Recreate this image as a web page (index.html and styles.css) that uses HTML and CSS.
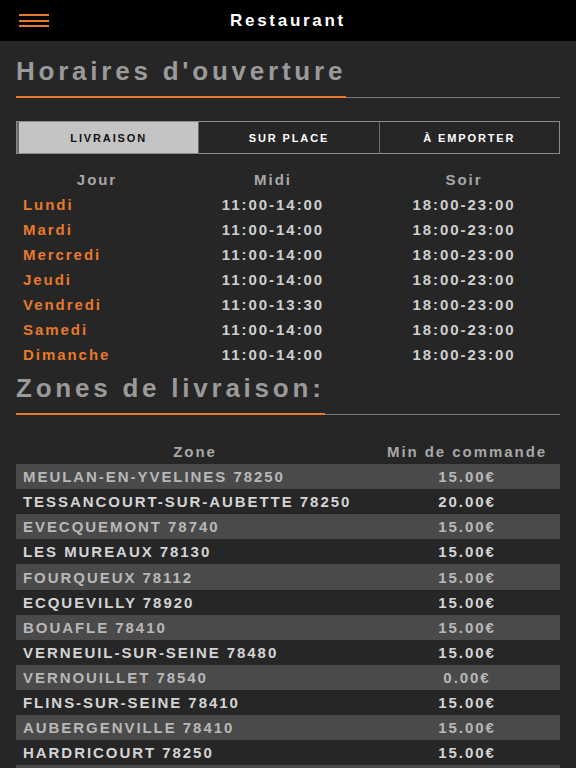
FILE: index.html
```html
<!DOCTYPE html>
<html lang="fr">
<head>
<meta charset="utf-8">
<title>Restaurant</title>
<link rel="stylesheet" href="styles.css">
</head>
<body>
<header class="topbar">
  <button class="burger" aria-label="Menu">
    <span></span><span></span><span></span>
  </button>
  <h1 class="topbar-title">Restaurant</h1>
</header>
<main class="content">
  <div class="title-wrap"><h2 class="title">Horaires d'ouverture</h2></div>
  <div class="tabs">
    <div class="tab active">LIVRAISON</div>
    <div class="tab">SUR PLACE</div>
    <div class="tab">À EMPORTER</div>
  </div>
  <div class="hours">
    <div class="hrow head"><span class="c1">Jour</span><span>Midi</span><span>Soir</span></div>
    <div class="hrow"><span class="day">Lundi</span><span>11:00-14:00</span><span>18:00-23:00</span></div>
    <div class="hrow"><span class="day">Mardi</span><span>11:00-14:00</span><span>18:00-23:00</span></div>
    <div class="hrow"><span class="day">Mercredi</span><span>11:00-14:00</span><span>18:00-23:00</span></div>
    <div class="hrow"><span class="day">Jeudi</span><span>11:00-14:00</span><span>18:00-23:00</span></div>
    <div class="hrow"><span class="day">Vendredi</span><span>11:00-13:30</span><span>18:00-23:00</span></div>
    <div class="hrow"><span class="day">Samedi</span><span>11:00-14:00</span><span>18:00-23:00</span></div>
    <div class="hrow"><span class="day">Dimanche</span><span>11:00-14:00</span><span>18:00-23:00</span></div>
  </div>
  <div class="title-wrap zones-title"><h2 class="title">Zones de livraison:</h2></div>
  <div class="zones">
    <div class="zrow head"><span>Zone</span><span>Min de commande</span></div>
    <div class="zrow odd"><span>MEULAN-EN-YVELINES 78250</span><span>15.00€</span></div>
    <div class="zrow"><span>TESSANCOURT-SUR-AUBETTE 78250</span><span>20.00€</span></div>
    <div class="zrow odd"><span>EVECQUEMONT 78740</span><span>15.00€</span></div>
    <div class="zrow"><span>LES MUREAUX 78130</span><span>15.00€</span></div>
    <div class="zrow odd"><span>FOURQUEUX 78112</span><span>15.00€</span></div>
    <div class="zrow"><span>ECQUEVILLY 78920</span><span>15.00€</span></div>
    <div class="zrow odd"><span>BOUAFLE 78410</span><span>15.00€</span></div>
    <div class="zrow"><span>VERNEUIL-SUR-SEINE 78480</span><span>15.00€</span></div>
    <div class="zrow odd"><span>VERNOUILLET 78540</span><span>0.00€</span></div>
    <div class="zrow"><span>FLINS-SUR-SEINE 78410</span><span>15.00€</span></div>
    <div class="zrow odd"><span>AUBERGENVILLE 78410</span><span>15.00€</span></div>
    <div class="zrow"><span>HARDRICOURT 78250</span><span>15.00€</span></div>
    <div class="zrow odd"><span></span><span></span></div>
  </div>
</main>
</body>
</html>
```
FILE: styles.css
```css
html, body {
  margin: 0;
  padding: 0;
}
body {
  background: #262626;
  font-family: "Liberation Sans", Arial, sans-serif;
  color: #dcdcdc;
  overflow: hidden;
  height: 768px;
}
.topbar {
  height: 41px;
  background: #000;
  display: flex;
  align-items: center;
  justify-content: center;
  position: relative;
}
.burger {
  position: absolute;
  left: 19px;
  top: 14px;
  width: 30px;
  height: 13px;
  padding: 0;
  border: 0;
  background: transparent;
  display: flex;
  flex-direction: column;
  justify-content: space-between;
}
.burger span {
  display: block;
  height: 2px;
  background: #e8792a;
}
.topbar-title {
  margin: 0;
  color: #fff;
  font-size: 17px;
  font-weight: 700;
  letter-spacing: 0.16em;
}
.content {
  padding: 0 16px;
}
.title-wrap {
  margin-top: 15px;
  border-bottom: 1px solid #7a7a7a;
  display: flex;
}
.title {
  margin: 0 0 -1px 0;
  font-size: 26px;
  line-height: 30px;
  font-weight: 700;
  color: #9a9a9a;
  letter-spacing: 0.145em;
  padding-bottom: 10px;
  border-bottom: 2px solid #e8792a;
}
.zones-title {
  margin-top: 6px;
}
.tabs {
  margin-top: 23px;
  display: flex;
  height: 31px;
  border: 1px solid #8a8a8a;
}
.tab {
  flex: 1;
  display: flex;
  align-items: center;
  justify-content: center;
  font-size: 11px;
  font-weight: 700;
  letter-spacing: 0.17em;
  color: #fff;
  border-left: 1px solid #6a6a6a;
}
.tab:first-child {
  border-left: 2px solid #6a6a6a;
}
.tab.active {
  background: #c4c4c4;
  color: #111;
}
.hours {
  margin-top: 13px;
}
.hrow {
  display: grid;
  grid-template-columns: 162px 190px 192px;
  height: 25px;
  align-items: center;
  font-size: 15px;
  font-weight: 700;
  letter-spacing: 0.13em;
  color: #cfcfcf;
}
.hrow span {
  text-align: center;
}
.hrow .day {
  text-align: left;
  padding-left: 7px;
  color: #e8792a;
}
.hrow.head {
  color: #a8a8a8;
}
.zones {
  margin-top: 24px;
}
.zrow {
  display: grid;
  grid-template-columns: 358px 186px;
  height: 25.1px;
  align-items: center;
  font-size: 15px;
  font-weight: 700;
  letter-spacing: 0.13em;
  color: #d4d4d4;
}
.zrow span:first-child {
  padding-left: 7px;
}
.zrow span:last-child {
  text-align: center;
}
.zrow.odd {
  background: #4a4a4a;
  color: #b8b8b8;
}
.zrow.head {
  color: #a8a8a8;
}
.zrow.head span:first-child {
  text-align: center;
  padding-left: 0;
}
```
